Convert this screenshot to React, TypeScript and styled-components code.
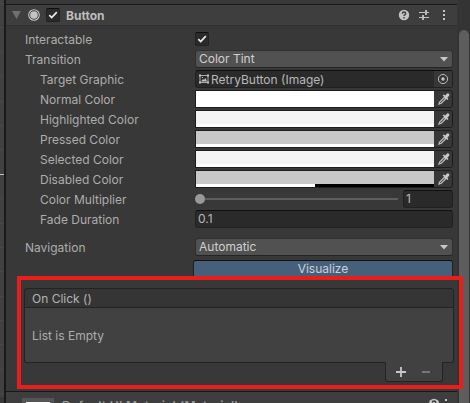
import React from "react";
import styled, { createGlobalStyle } from "styled-components";

const GlobalStyle = createGlobalStyle`
  * { box-sizing: border-box; }
  html, body { margin: 0; background: #383838; overflow: hidden; }
  body { font-family: Inter, "Liberation Sans", sans-serif; font-size: 12px; color: #adadad; }
`;

const Window = styled.div`
  position: relative;
  display: grid;
  grid-template-columns: 4px 2px 451px 13px;
  width: 470px;
  height: 403px;
  overflow: hidden;
  background: #383838;
`;

const SceneEdge = styled.div`
  display: flex;
  flex-direction: column;
  gap: 23.4px;
  height: 397px;
  padding-top: 3px;
  overflow: hidden;
  background: #414141;
`;

const GridLine = styled.div<{ $bright?: boolean }>`
  flex: none;
  height: 1px;
  background: ${(p) => (p.$bright ? "#c4c4c4" : "#484848")};
`;

const Divider = styled.div`
  background: #191919;
`;

const Panel = styled.main`
  display: flex;
  flex-direction: column;
  min-width: 0;
  height: 403px;
  overflow: hidden;
`;

const Header = styled.header`
  display: flex;
  flex: none;
  align-items: center;
  height: 22px;
  margin-top: 4px;
  padding: 0 7px 0 6px;
  border-top: 1px solid #1a1a1a;
  border-bottom: 1px solid #303030;
  background: #3e3e3e;
`;

const Title = styled.h1`
  flex: 1;
  margin: 0 0 0 6px;
  padding-top: 1px;
  font-size: 12px;
  font-weight: 700;
  line-height: 20px;
  color: #bdbdbd;
`;

const HeaderIcons = styled.div`
  display: flex;
  align-items: center;
  gap: 8px;
`;

const Check = styled.span`
  display: flex;
  align-items: center;
  justify-content: center;
  width: 14px;
  height: 14px;
  border: 1px solid #212121;
  border-top-color: #0f0f0f;
  border-radius: 2px;
  background: #2a2a2a;
`;

const Properties = styled.section`
  flex: none;
  padding: 3px 4px 0 19px;
`;

const Row = styled.div<{ $gap?: number }>`
  display: grid;
  grid-template-columns: 170px 258px;
  align-items: center;
  height: 20px;
  margin-top: ${(p) => p.$gap ?? 0}px;
`;

const Label = styled.span<{ $nested?: boolean }>`
  height: 20px;
  padding-left: ${(p) => (p.$nested ? 15 : 0)}px;
  line-height: 22px;
  white-space: nowrap;
`;

const Dropdown = styled.div`
  display: flex;
  align-items: center;
  justify-content: space-between;
  height: 18px;
  padding: 0 4px 0 3px;
  border: 1px solid #303030;
  border-bottom-color: #242424;
  border-radius: 3px;
  background: #515151;
  color: #d0d0d0;
  line-height: 16px;
`;

const Field = styled.div`
  display: flex;
  align-items: center;
  height: 18px;
  padding-left: 2px;
  border: 1px solid #212121;
  border-top-color: #0f0f0f;
  border-radius: 3px;
  background: #2a2a2a;
  color: #b8b8b8;
  line-height: 16px;
`;

const ObjectName = styled.span`
  flex: 1;
  margin-left: 1px;
  padding-top: 1px;
`;

const FieldButton = styled.span`
  display: flex;
  align-items: center;
  justify-content: center;
  width: 18px;
  height: 16px;
  background: #373737;
`;

const ColorBox = styled.div`
  display: flex;
  height: 18px;
  border: 1px solid #1c1c1c;
  border-radius: 0 3px 3px 0;
  overflow: hidden;
  background: #373737;
`;

const Swatch = styled.div<{ $color: string; $alpha: number }>`
  display: flex;
  align-items: flex-end;
  flex: 1;
  background: ${(p) => p.$color};

  &::after {
    content: "";
    width: 100%;
    height: 3px;
    background: linear-gradient(to right, #fff ${(p) => p.$alpha}%, #000 ${(p) => p.$alpha}%);
  }
`;

const SliderRow = styled.div`
  display: grid;
  grid-template-columns: 203px 50px;
  gap: 5px;
  align-items: center;
`;

const Slider = styled.div`
  display: flex;
  align-items: center;
`;

const Knob = styled.span`
  width: 10px;
  height: 10px;
  border-radius: 50%;
  background: #999;
`;

const Track = styled.span`
  flex: 1;
  height: 2px;
  background: #5e5e5e;
`;

const Visualize = styled.button`
  display: block;
  width: 260px;
  height: 19px;
  margin: 3px 0 0 168px;
  padding: 0 0 2px;
  border: 1px solid #202020;
  border-top-color: #101010;
  border-radius: 3px;
  background: #46607c;
  color: #c9d0d8;
  font: inherit;
  line-height: 15px;
`;

const EventList = styled.section`
  flex: none;
  width: 430px;
  margin: 9px 0 0 18px;
`;

const ListHeader = styled.div`
  height: 20px;
  padding-left: 7px;
  border: 1px solid #222;
  border-radius: 3px 3px 0 0;
  background: #353535;
  color: #b4b4b4;
  line-height: 19px;
`;

const ListBody = styled.div`
  height: 55px;
  padding-left: 7px;
  border: 1px solid #242424;
  border-top: 0;
  border-radius: 0 0 3px 3px;
  background: #414141;
  line-height: 56px;
`;

const ListFooter = styled.div`
  display: flex;
  align-items: center;
  justify-content: space-around;
  width: 58px;
  height: 20px;
  margin: -1px 0 0 361px;
  padding: 0 4px 0 2px;
  border: 1px solid #242424;
  border-top: 0;
  border-radius: 0 0 3px 3px;
  background: #414141;
`;

const Material = styled.footer`
  display: flex;
  align-items: flex-start;
  flex: none;
  height: 30px;
  margin-top: 9px;
  padding: 6px 5px 0 16px;
  border-top: 1px solid #191919;
  background: #3e3e3e;
`;

const Preview = styled.div`
  width: 32px;
  height: 32px;
  padding: 4px;
  background: #555;

  &::after {
    content: "";
    display: block;
    height: 24px;
    background: #fff;
  }
`;

const MaterialName = styled.span`
  flex: 1;
  margin-left: 8px;
  font-weight: 600;
  letter-spacing: 0.35px;
  line-height: 15px;
  color: #989898;
`;

const ScrollArea = styled.aside`
  padding: 30px 1px 0 2px;
  background: #343434;
`;

const Thumb = styled.div`
  height: 390px;
  border-radius: 5px;
  background: #5d5d5d;
`;

const Highlight = styled.div`
  position: absolute;
  left: 17px;
  top: 276px;
  width: 446px;
  height: 113px;
  border: 4px solid #e91e1a;
  pointer-events: none;
`;

const CheckMark = () => (
  <svg width="10" height="10" viewBox="0 0 10 10">
    <path d="M1.3 5.2 3.7 7.6 8.8 2.1" fill="none" stroke="#ececec" strokeWidth="1.7" />
  </svg>
);

const Arrow = () => (
  <svg width="8" height="6" viewBox="0 0 8 6">
    <path d="M0 1h8L4 5.5z" fill="#c8c8c8" />
  </svg>
);

const Dropper = () => (
  <svg width="14" height="14" viewBox="0 0 14 14">
    <path d="M3 12 3.8 9.8 8.3 5.3l1.5 1.5-4.5 4.5z" fill="none" stroke="#bcbcbc" strokeWidth="1.3" />
    <path d="m6.7 3.4 1-1 1.5 1 1.6-1.7q1.1-.9 2.1.1t.1 2.1l-1.6 1.6 1 1.4-1 1z" fill="#c8c8c8" />
  </svg>
);

const Help = () => (
  <svg width="12" height="12" viewBox="0 0 12 12">
    <circle cx="6" cy="6" r="5.2" fill="#c4c4c4" />
    <path d="M4.3 4.7q0-1.7 1.7-1.7t1.7 1.5C7.7 5.7 6 5.6 6 7M6 8v1.4" fill="none" stroke="#3e3e3e" strokeWidth="1.4" />
  </svg>
);

const Presets = () => (
  <svg width="12" height="12" viewBox="0 0 12 12">
    <path d="M1 3.5h6M8 3.5h3M1 8.5h3M5 8.5h6" stroke="#c4c4c4" strokeWidth="1.2" />
    <path d="M8 1v5M5 6v5" stroke="#c4c4c4" strokeWidth="1.8" />
  </svg>
);

const More = () => (
  <svg width="12" height="12" viewBox="0 0 12 12">
    <path d="M5 1h2v2H5zM5 5h2v2H5zM5 9h2v2H5z" fill="#c4c4c4" />
  </svg>
);

const colors = [
  { name: "Normal Color", color: "#ffffff", alpha: 100 },
  { name: "Highlighted Color", color: "#f4f4f4", alpha: 100 },
  { name: "Pressed Color", color: "#c8c8c8", alpha: 100 },
  { name: "Selected Color", color: "#f5f4f5", alpha: 100 },
  { name: "Disabled Color", color: "#c8c8c8", alpha: 50 },
];

export default function App() {
  return (
    <>
      <GlobalStyle />
      <Window>
        <SceneEdge>
          {Array.from({ length: 17 }, (_, n) => (
            <GridLine key={n} $bright={n === 7} />
          ))}
        </SceneEdge>
        <Divider />
        <Panel>
          <Header>
            <svg width="34" height="14" viewBox="0 0 34 14">
              <path d="M0 3h9L4.5 11z" fill="#707070" />
              <circle cx="22" cy="7" r="5.3" fill="none" stroke="#c4c4c4" strokeWidth="1.1" />
              <circle cx="22" cy="7" r="3.8" fill="#c4c4c4" />
            </svg>
            <Check><CheckMark /></Check>
            <Title>Button</Title>
            <HeaderIcons><Help /><Presets /><More /></HeaderIcons>
          </Header>
          <Properties>
            <Row>
              <Label>Interactable</Label>
              <Check><CheckMark /></Check>
            </Row>
            <Row>
              <Label>Transition</Label>
              <Dropdown>Color Tint<Arrow /></Dropdown>
            </Row>
            <Row>
              <Label $nested>Target Graphic</Label>
              <Field>
                <svg width="12" height="10" viewBox="0 0 12 10">
                  <path d="M2 1.5h8v7H2z" fill="none" stroke="#aaa" />
                  <path d="M3 7.5 5 5l1 1 1.5-2L9 7.5zM4 3h1v1H4zM1 .5h2v2H1zM9 .5h2v2H9zM1 7.5h2v2H1zM9 7.5h2v2H9z" fill="#c4c4c4" />
                </svg>
                <ObjectName>RetryButton (Image)</ObjectName>
                <FieldButton>
                  <svg width="12" height="12" viewBox="0 0 12 12">
                    <circle cx="6" cy="6" r="4.6" fill="none" stroke="#bbb" />
                    <circle cx="6" cy="6" r="1.7" fill="#c4c4c4" />
                  </svg>
                </FieldButton>
              </Field>
            </Row>
            {colors.map((c) => (
              <Row key={c.name}>
                <Label $nested>{c.name}</Label>
                <ColorBox>
                  <Swatch $color={c.color} $alpha={c.alpha} />
                  <FieldButton><Dropper /></FieldButton>
                </ColorBox>
              </Row>
            ))}
            <Row>
              <Label $nested>Color Multiplier</Label>
              <SliderRow>
                <Slider><Knob /><Track /></Slider>
                <Field>1</Field>
              </SliderRow>
            </Row>
            <Row>
              <Label $nested>Fade Duration</Label>
              <Field>0.1</Field>
            </Row>
            <Row $gap={8}>
              <Label>Navigation</Label>
              <Dropdown>Automatic<Arrow /></Dropdown>
            </Row>
            <Visualize>Visualize</Visualize>
          </Properties>
          <EventList>
            <ListHeader>On Click ()</ListHeader>
            <ListBody>List is Empty</ListBody>
            <ListFooter>
              <svg width="12" height="12" viewBox="0 0 12 12">
                <path d="M1 6h10M6 1v10" stroke="#c8c8c8" strokeWidth="1.8" />
              </svg>
              <svg width="12" height="12" viewBox="0 0 12 12">
                <path d="M2 6h8" stroke="#7d7d7d" strokeWidth="1.8" />
              </svg>
            </ListFooter>
          </EventList>
          <Material>
            <Preview />
            <MaterialName>Default UI Material (Material)</MaterialName>
            <Help />
            <More />
          </Material>
        </Panel>
        <ScrollArea><Thumb /></ScrollArea>
        <Highlight />
      </Window>
    </>
  );
}
